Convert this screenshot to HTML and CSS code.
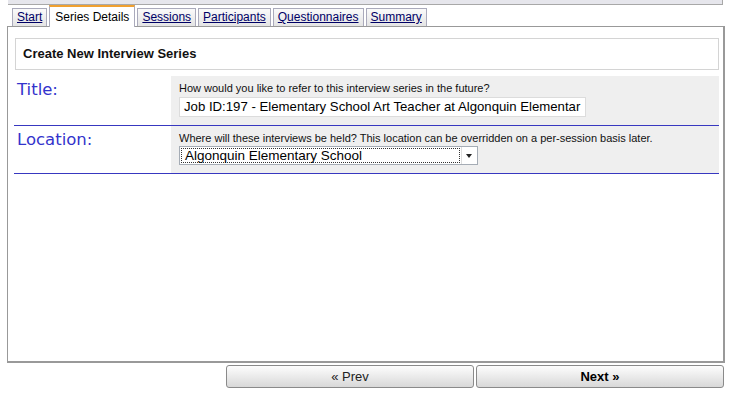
FILE: index.html
```html
<!DOCTYPE html>
<html lang="en">
<head>
    <meta charset="UTF-8">
    <title>Create New Interview Series</title>
    <link rel="stylesheet" href="styles.css">
</head>
<body>
    <div class="topbar"></div>

    <div class="tabs">
        <a class="tab" href="#">Start</a>
        <span class="tab active">Series Details</span>
        <a class="tab" href="#">Sessions</a>
        <a class="tab" href="#">Participants</a>
        <a class="tab" href="#">Questionnaires</a>
        <a class="tab" href="#">Summary</a>
    </div>

    <div class="panel">
        <div class="heading">Create New Interview Series</div>

        <div class="row">
            <div class="label">Title:</div>
            <div class="field">
                <div class="hint">How would you like to refer to this interview series in the future?</div>
                <div class="textbox">Job ID:197 - Elementary School Art Teacher at Algonquin Elementar</div>
            </div>
        </div>

        <div class="row">
            <div class="label">Location:</div>
            <div class="field">
                <div class="hint">Where will these interviews be held? This location can be overridden on a per-session basis later.</div>
                <div class="select">
                    <span class="select-value">Algonquin Elementary School</span>
                    <span class="select-arrow"></span>
                </div>
            </div>
        </div>
    </div>

    <div class="buttons">
        <button class="btn">&laquo; Prev</button>
        <button class="btn next">Next &raquo;</button>
    </div>
</body>
</html>
```

FILE: styles.css
```css
body {
    margin: 0;
    width: 730px;
    height: 393px;
    overflow: hidden;
    background: #fff;
    font-family: "Liberation Sans", Arial, sans-serif;
}
.topbar {
    margin-left: 8px;
    width: 714px;
    height: 4px;
    background: #e6e6ec;
    border-bottom: 1px solid #a8a8a8;
    border-right: 1px solid #a8a8a8;
}
.tabs {
    display: flex;
    align-items: flex-end;
    gap: 2px;
    margin-left: 12px;
    height: 21px;
}
.tab {
    display: block;
    height: 17px;
    line-height: 17px;
    padding: 0 4px;
    border: 1px solid #aab;
    border-bottom: none;
    background: linear-gradient(#fafafa, #e4e4e4);
    font-size: 12px;
    color: #000066;
    text-decoration: underline;
}
.tab.active {
    height: 20px;
    line-height: 20px;
    padding: 0 5px;
    margin-bottom: -1px;
    border-top: 2px solid #f0a030;
    background: #fff;
    color: #000;
    text-decoration: none;
    position: relative;
}
.panel {
    margin-left: 7px;
    padding: 11px 4px 0 6px;
    box-sizing: border-box;
    width: 718px;
    height: 337px;
    border: 1px solid #999;
    border-right: 2px solid #999;
    border-bottom: 2px solid #999;
}
.heading {
    width: 704px;
    height: 32px;
    box-sizing: border-box;
    border: 1px solid #d4d4d4;
    padding-left: 7px;
    line-height: 30px;
    font-size: 13px;
    font-weight: bold;
    color: #111;
    margin-left: 1px;
}
.row {
    display: flex;
    width: 705px;
    margin-top: 6px;
    border-bottom: 1px solid #3838c0;
}
.row + .row {
    margin-top: 0;
}
.label {
    width: 157px;
    padding: 4px 0 0 3px;
    box-sizing: border-box;
    font-family: "DejaVu Sans", Verdana, sans-serif;
    font-size: 16.5px;
    color: #3333cc;
}
.field {
    flex: 1;
    background: #efefef;
    padding: 6px 8px 8px;
    height: 49px;
    box-sizing: border-box;
}
.row + .row .field {
    height: 47px;
    padding-top: 6px;
}
.hint {
    font-size: 11px;
    color: #111;
    line-height: 13px;
}
.textbox {
    margin-top: 2px;
    width: 407px;
    height: 20px;
    box-sizing: border-box;
    border: 1px solid #dcdcdc;
    background: #fff;
    padding-left: 4px;
    font-size: 13.2px;
    line-height: 18px;
    white-space: nowrap;
    overflow: hidden;
    color: #000;
}
.select {
    display: flex;
    margin-top: 1px;
    width: 299px;
    height: 19px;
    box-sizing: border-box;
    border: 1px solid #a5acb5;
    background: #fff;
    font-size: 13.5px;
}
.select-value {
    flex: 1;
    margin: 1px;
    padding-left: 3px;
    border: 1px dotted #333;
    line-height: 13px;
}
.select-arrow {
    width: 15px;
    position: relative;
    border-left: 1px solid #ddd;
}
.select-arrow::after {
    content: "";
    position: absolute;
    left: 4px;
    top: 7px;
    border-left: 3px solid transparent;
    border-right: 3px solid transparent;
    border-top: 4px solid #222;
}
.buttons {
    display: flex;
    gap: 2px;
    margin: 2px 0 0 226px;
}
.btn {
    width: 248px;
    height: 23px;
    border: 1px solid #8a8a8a;
    border-radius: 3px;
    background: linear-gradient(#fdfdfd, #d8d8d8);
    font-family: "Liberation Sans", Arial, sans-serif;
    font-size: 13px;
    color: #222;
    padding: 0;
}
.btn.next {
    font-weight: bold;
    color: #000;
}
```
